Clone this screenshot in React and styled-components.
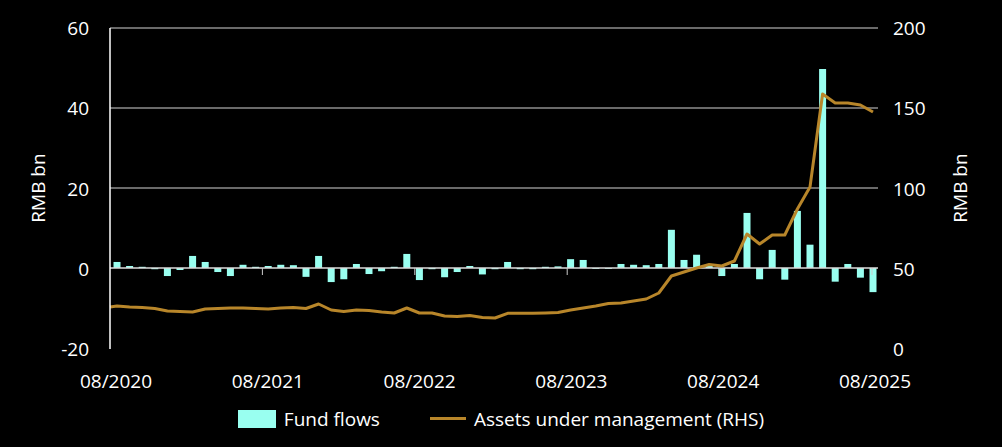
import React from "react";
import styled, { createGlobalStyle } from "styled-components";

const Global = createGlobalStyle`
  html, body { margin: 0; background: #000; }
  body { font-family: "Open Sans", "Noto Sans", sans-serif; color: #fff; }
`;

const Page = styled.div`
  width: 1002px; height: 447px; background: #000;
  display: flex; flex-direction: column;
`;
const Chart = styled.svg`display: block;`;
const Legend = styled.div`
  display: flex; align-items: center; justify-content: center; gap: 50px;
  height: 47px; padding-right: 0; margin-top: -5px; font-size: 19px;
`;
const Item = styled.div`display: flex; align-items: center; gap: 8px;`;
const BarSwatch = styled.span`width: 38px; height: 18px; background: #99fff0; display: inline-block;`;
const LineSwatch = styled.span`width: 36px; height: 3px; background: #b8862a; display: inline-block;`;

const flows = [1.5,0.5,0.3,-0.3,-2,-0.5,3,1.5,-1,-2,0.8,0.3,0.5,0.8,0.7,-2.2,3,-3.5,-2.8,1,-1.5,-0.8,0.3,3.5,-3,-0.3,-2.3,-1,0.5,-1.6,
  -0.3,1.5,-0.3,-0.3,0.3,0.4,2.2,2,-0.2,-0.2,1,0.8,0.7,1,9.5,2,3.3,0.5,-2,1,13.7,-2.8,4.5,-2.9,14.2,5.8,49.5,-3.4,1,-2.4,-6];
const aumY = [306,307,307.5,308.5,311,311.5,312,309,308.5,308,308,308.5,309,308,307.5,308.5,304,310,311.5,310,310.5,312,313,308,313,313,316,316.5,315.5,317.5,
  318,313.3,313.3,313.3,313,312.5,310,308,306,303.5,303,301,299,293,276,272,268,264.5,266,261,234,244,235,235,209,187,94,103,103,105,112];

const X0 = 117, DX = 12.6, ZERO = 268;
const yL = v => ZERO - v * 4.02;

export default function App() {
  const pts = aumY.map((y, i) => `${(X0 + DX * i).toFixed(1)},${y}`);
  pts.unshift(`110,307`);
  const years = ["08/2020","08/2021","08/2022","08/2023","08/2024","08/2025"];
  return (
    <Page>
      <Global />
      <Chart width="1002" height="400" viewBox="0 0 1002 400">
        {[28, 108, 188].map(y => <line key={y} x1="110" x2="878" y1={y} y2={y} stroke="#6a6a6a" strokeWidth="2" />)}
        {flows.map((v, i) => {
          const x = X0 + DX * i - 3.5;
          const y = v >= 0 ? yL(v) : ZERO;
          return <rect key={i} x={x} y={y} width="7" height={Math.abs(v * 4.02)} fill="#99fff0" />;
        })}
        <line x1="110" x2="878" y1={ZERO} y2={ZERO} stroke="#ddd" strokeWidth="1.5" />
        {[1,2,3,4,5].map(k => <line key={k} x1={110 + k*152.4} x2={110 + k*152.4} y1={ZERO} y2={ZERO+7} stroke="#ccc" strokeWidth="1" />)}
        <polyline points={pts.join(" ")} fill="none" stroke="#b8862a" strokeWidth="3" strokeLinejoin="round" />
        <line x1="110" x2="110" y1="28" y2="349" stroke="#fff" strokeWidth="1.5" />
        <g fontFamily="Open Sans, sans-serif" fontSize="19" fill="#fff">
          {[60,40,20,0,-20].map((v, i) => <text key={v} x="89" y={35 + i*80.3} textAnchor="end">{v}</text>)}
          {[200,150,100,50,0].map((v, i) => <text key={v} x="893" y={35 + i*80.3}>{v}</text>)}
          {years.map((t, i) => <text key={t} x={116 + i*151.8} y="388" textAnchor="middle">{t}</text>)}
          <text transform="translate(45,188) rotate(-90)" textAnchor="middle">RMB bn</text>
          <text transform="translate(967,188) rotate(-90)" textAnchor="middle">RMB bn</text>
        </g>
      </Chart>
      <Legend>
        <Item><BarSwatch />Fund flows</Item>
        <Item><LineSwatch />Assets under management (RHS)</Item>
      </Legend>
    </Page>
  );
}
